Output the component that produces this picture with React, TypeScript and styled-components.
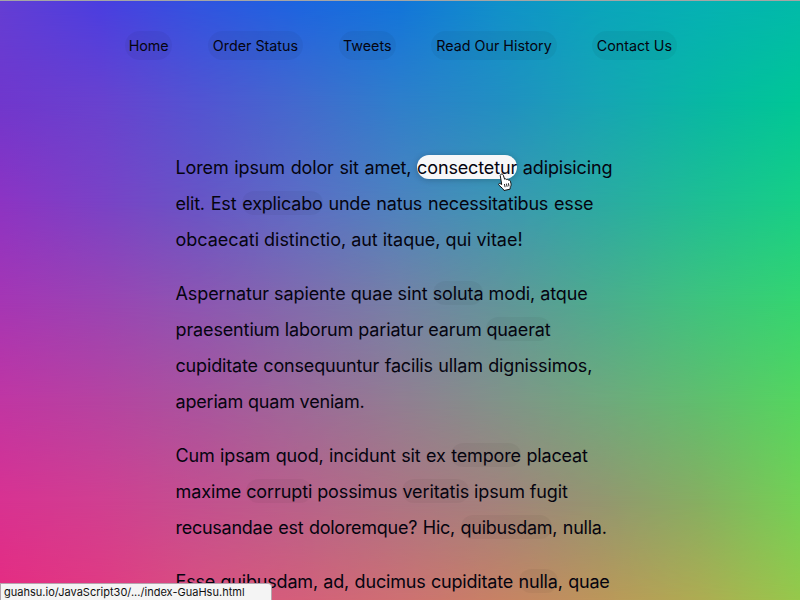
import React from "react";
import styled, { createGlobalStyle } from "styled-components";

const GlobalStyle = createGlobalStyle`
  *, *::before, *::after { box-sizing: border-box; }
  body { margin: 0; overflow: hidden; }
`;

const Page = styled.div`
  display: grid;
  position: relative;
  width: 800px;
  height: 600px;
  overflow: hidden;
  border-top: 1px solid #a5a5a5;
  color: #05040f;
  font-family: Inter, "Liberation Sans", sans-serif;
`;

const Backdrop = styled.div`
  grid-area: 1 / 1;
  display: grid;
  height: 599px;
`;

/* Each band fades in below the previous one, so neighbouring bands blend. */
const Band = styled.div<{ $colors: string[]; $from: number; $to: number }>`
  grid-area: 1 / 1;
  background: linear-gradient(to right, ${(p) => p.$colors.map((c) => `rgb(${c})`).join(", ")});
  mask-image: ${(p) =>
    p.$to > 0
      ? `linear-gradient(to bottom, transparent ${p.$from}px, #000 ${p.$to}px)`
      : "none"};
`;

const Content = styled.div`
  grid-area: 1 / 1;
  position: relative;
`;

const Nav = styled.nav`
  display: flex;
  justify-content: center;
  gap: 35.3px;
  padding: 30px 0 0 1.5px;
`;

const NavLink = styled.a<{ $w: number }>`
  width: ${(p) => p.$w}px;
  height: 29px;
  border-radius: 14.5px;
  background: rgba(0, 0, 0, 0.045);
  font-size: 14.3px;
  line-height: 29px;
  text-align: center;
  white-space: nowrap;
`;

const Article = styled.main`
  width: 450px;
  margin: 90px 0 0 175.5px;
`;

const Paragraph = styled.p`
  margin: 0 0 18px;
  font-size: 18px;
  line-height: 36px;
`;

const Line = styled.span<{ $s: number; $w?: number }>`
  display: block;
  white-space: nowrap;
  letter-spacing: ${(p) => p.$s}px;
  word-spacing: ${(p) => p.$w ?? 0}px;
`;

const Trigger = styled.a<{ $active?: boolean }>`
  padding: 2px 0 1px;
  border-radius: 12.5px;
  background: ${(p) => (p.$active ? "#f7f7f8" : "rgba(0, 0, 0, 0.04)")};
  box-shadow: ${(p) => (p.$active ? "0 1px 6px rgba(0, 0, 0, 0.22)" : "none")};
`;

const StatusBar = styled.div`
  position: absolute;
  left: 0;
  bottom: 0;
  width: 272px;
  height: 17px;
  padding-left: 3px;
  border: 1px solid #b5a5ae;
  border-bottom: 0;
  border-top-right-radius: 4px;
  background: #f4f4f4;
  color: #111;
  font-size: 11px;
  letter-spacing: 0.02px;
  line-height: 17px;
  white-space: nowrap;
`;

const Cursor = styled.svg`
  position: absolute;
  left: 497px;
  top: 172px;
`;

const bands = [
  ["100,62,212", "74,62,224", "48,84,224", "28,101,224", "18,117,218", "16,145,202", "10,165,188", "5,177,180", "2,186,170"],
  ["112,55,205", "104,66,207", "82,84,210", "66,106,206", "46,127,203", "33,143,194", "22,165,180", "8,183,164", "0,199,150"],
  ["140,52,195", "122,66,198", "103,85,198", "92,109,197", "76,131,191", "60,151,179", "43,170,163", "30,190,148", "22,207,134"],
  ["165,54,180", "154,68,179", "140,86,178", "128,108,173", "117,129,166", "98,149,154", "76,172,142", "62,195,126", "52,213,112"],
  ["192,54,163", "182,67,161", "169,84,158", "157,105,153", "145,126,146", "129,147,137", "112,168,125", "96,190,110", "84,214,95"],
  ["216,50,145", "208,63,145", "195,80,143", "184,98,138", "173,116,131", "162,131,124", "148,150,112", "134,175,97", "115,209,85"],
  ["230,44,128", "226,58,129", "218,80,128", "212,95,122", "206,112,114", "199,130,100", "188,150,90", "174,172,82", "150,200,75"],
];

const links = [
  { label: "Home", w: 47.5 },
  { label: "Order Status", w: 95.5 },
  { label: "Tweets", w: 57.5 },
  { label: "Read Our History", w: 125.5 },
  { label: "Contact Us", w: 84.5 },
];

export default function App() {
  return (
    <>
      <GlobalStyle />
      <Page>
        <Backdrop>
          {bands.map((colors, i) => (
            <Band key={i} $colors={colors} $from={(i - 1) * 100} $to={i * 100} />
          ))}
        </Backdrop>
        <Content>
          <Nav>
            {links.map((l) => (
              <NavLink key={l.label} $w={l.w}>{l.label}</NavLink>
            ))}
          </Nav>
          <Article>
            <Paragraph>
              <Line $s={-0.14} $w={0.85}>Lorem ipsum dolor sit amet, <Trigger $active>consectetur</Trigger> adipisicing</Line>
              <Line $s={-0.19} $w={1}>elit. Est <Trigger>explicabo</Trigger> unde natus necessitatibus esse</Line>
              <Line $s={-0.02}>obcaecati distinctio, aut itaque, qui vitae!</Line>
            </Paragraph>
            <Paragraph>
              <Line $s={-0.1} $w={0.1}>Aspernatur sapiente quae sint <Trigger>soluta</Trigger> modi, atque</Line>
              <Line $s={-0.13}>praesentium laborum pariatur earum <Trigger>quaerat</Trigger></Line>
              <Line $s={-0.17} $w={0.6}>cupiditate consequuntur facilis ullam dignissimos,</Line>
              <Line $s={-0.19}>aperiam quam veniam.</Line>
            </Paragraph>
            <Paragraph>
              <Line $s={-0.15} $w={0.6}>Cum ipsam quod, incidunt sit ex <Trigger>tempore</Trigger> placeat</Line>
              <Line $s={-0.1}>maxime <Trigger>corrupti</Trigger> possimus <Trigger>veritatis</Trigger> ipsum fugit</Line>
              <Line $s={-0.26} $w={0.8}>recusandae est doloremque? Hic, <Trigger>quibusdam</Trigger>, nulla.</Line>
            </Paragraph>
            <Paragraph>
              <Line $s={-0.19} $w={0.6}>Esse quibusdam, ad, ducimus cupiditate <Trigger>nulla</Trigger>, quae</Line>
            </Paragraph>
          </Article>
        </Content>
        <Cursor width="16" height="19" viewBox="0 0 16 19">
          <path
            d="M4.2 1.2c1-.4 1.8.1 2.1 1l1.3 4c.7-.6 1.6-.4 2 .4.8-.5 1.6-.2 1.9.6.9-.3 1.6.1 1.9 1l.6 2.5c.3 1.5-.2 2.5-.7 3.6l-.3 1.900-6 1.300-1.200-1.800-3.900-3.600c-.8-.9.2-2.100 1.300-1.500l1.500.9L3.300 2.900c-.2-.8.100-1.400.9-1.700Z"
            fill="#fff"
            stroke="#111"
            strokeWidth="1"
          />
          <path d="M7.4 11l.7 3.2M9.4 10.6l.7 3.2M11.4 10.2l.6 3.2" stroke="#111" strokeWidth="0.9" fill="none" />
        </Cursor>
        <StatusBar>guahsu.io/JavaScript30/.../index-GuaHsu.html</StatusBar>
      </Page>
    </>
  );
}
